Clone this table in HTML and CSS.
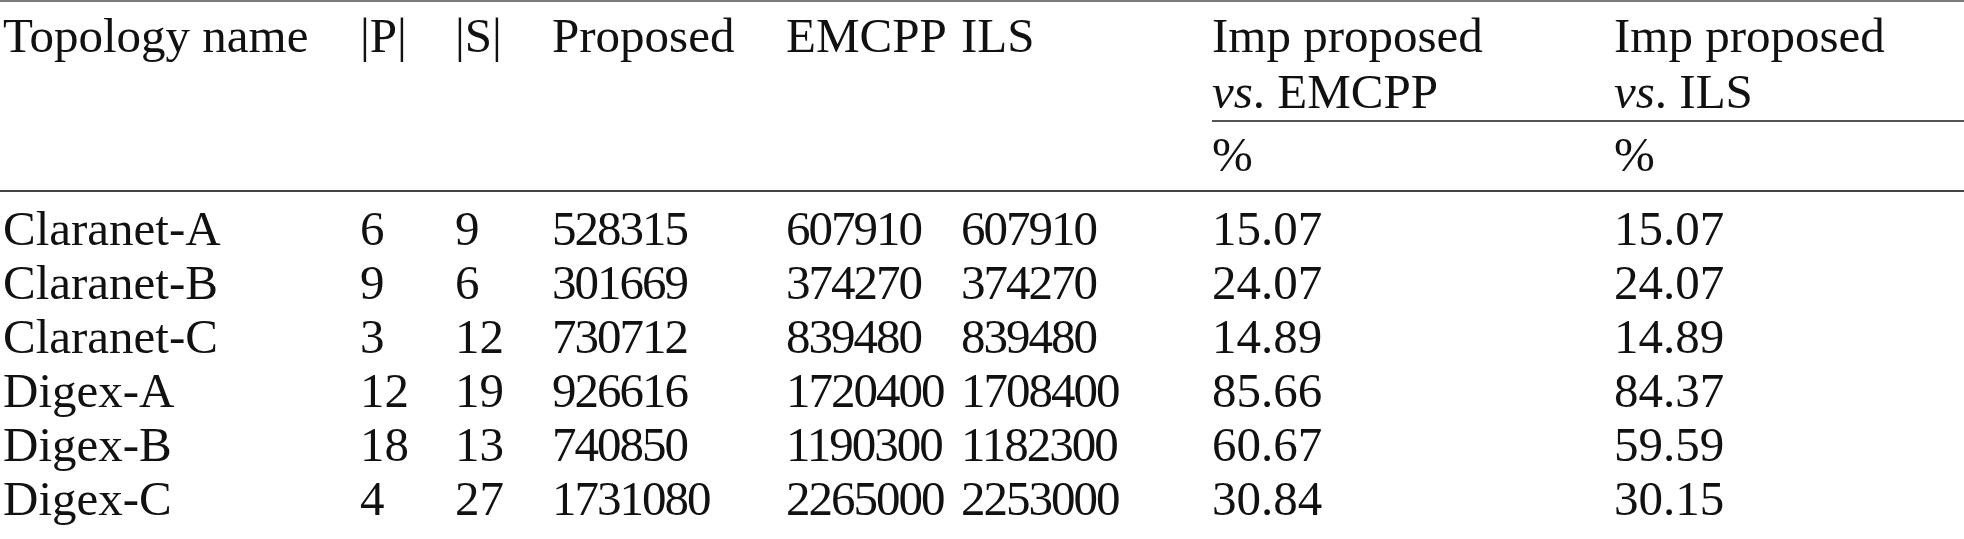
FILE: index.html
```html
<!DOCTYPE html>
<html lang="en">
<head>
  <meta charset="UTF-8" />
  <title>Topology results</title>
  <link rel="stylesheet" href="styles.css">
</head>
<body>

  <table class="results">
    <colgroup>
      <col class="c-name">
      <col class="c-p">
      <col class="c-s">
      <col class="c-prop">
      <col class="c-emcpp">
      <col class="c-ils">
      <col class="c-imp1">
      <col class="c-imp2">
    </colgroup>
    <thead>
      <tr>
        <th rowspan="2" class="first">Topology name</th>
        <th rowspan="2">|P|</th>
        <th rowspan="2">|S|</th>
        <th rowspan="2">Proposed</th>
        <th rowspan="2">EMCPP</th>
        <th rowspan="2">ILS</th>
        <th class="imp">Imp proposed<br><i>vs</i>. EMCPP</th>
        <th class="imp">Imp proposed<br><i>vs</i>. ILS</th>
      </tr>
      <tr>
        <th class="unit">%</th>
        <th class="unit">%</th>
      </tr>
    </thead>
    <tbody>
      <tr>
        <td class="first">Claranet-A</td><td>6</td><td>9</td><td class="big">528315</td><td class="big">607910</td><td class="big">607910</td><td>15.07</td><td>15.07</td>
      </tr>
      <tr>
        <td class="first">Claranet-B</td><td>9</td><td>6</td><td class="big">301669</td><td class="big">374270</td><td class="big">374270</td><td>24.07</td><td>24.07</td>
      </tr>
      <tr>
        <td class="first">Claranet-C</td><td>3</td><td>12</td><td class="big">730712</td><td class="big">839480</td><td class="big">839480</td><td>14.89</td><td>14.89</td>
      </tr>
      <tr>
        <td class="first">Digex-A</td><td>12</td><td>19</td><td class="big">926616</td><td class="big">1720400</td><td class="big">1708400</td><td>85.66</td><td>84.37</td>
      </tr>
      <tr>
        <td class="first">Digex-B</td><td>18</td><td>13</td><td class="big">740850</td><td class="big">1190300</td><td class="big">1182300</td><td>60.67</td><td>59.59</td>
      </tr>
      <tr>
        <td class="first">Digex-C</td><td>4</td><td>27</td><td class="big">1731080</td><td class="big">2265000</td><td class="big">2253000</td><td>30.84</td><td>30.15</td>
      </tr>
    </tbody>
  </table>

</body>
</html>
```

FILE: styles.css
```css
body {
  margin: 0;
  background: #fff;
  color: #111;
  font-family: "Liberation Serif", "Times New Roman", serif;
}

.results {
  width: 1964px;
  table-layout: fixed;
  border-collapse: separate;
  border-spacing: 0;
  border-top: 2px solid #7c7c7c;
  border-bottom: 2px solid #7c7c7c;
  font-size: 49px;
  line-height: 54px;
}

.c-name { width: 360px; }
.c-p { width: 95px; }
.c-s { width: 97px; }
.c-prop { width: 234px; }
.c-emcpp { width: 175px; }
.c-ils { width: 251px; }
.c-imp1 { width: 402px; }
.c-imp2 { width: 350px; }

th, td {
  padding: 0;
  text-align: left;
  font-weight: normal;
  white-space: nowrap;
  vertical-align: top;
}

.first {
  padding-left: 3px;
}

/* long integers are set a little tighter, as in the print version */
.big {
  letter-spacing: -2px;
}

thead th {
  line-height: 56px;
  padding-top: 6px;
}

thead th[rowspan] {
  border-bottom: 2px solid #444;
}

th.imp {
  border-bottom: 2px solid #555;
}

th.unit {
  line-height: 53px;
  padding-top: 6px;
  padding-bottom: 9px;
  border-bottom: 2px solid #444;
}

tbody tr:first-child td {
  padding-top: 10px;
}

tbody tr:last-child td {
  padding-bottom: 13px;
}
```
